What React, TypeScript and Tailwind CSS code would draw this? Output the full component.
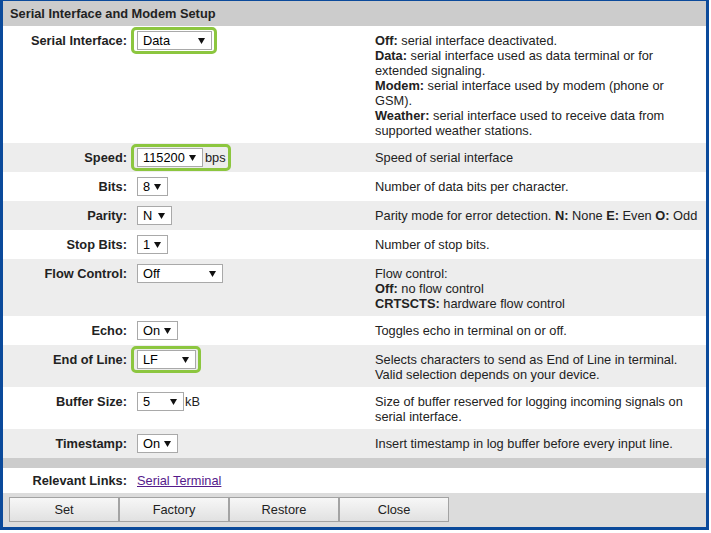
import React from "react";

const GREEN = "border-[#8cc63f]";

function Sel({ value, w }: { value: string; w: number }) {
  return (
    <span
      className="relative inline-flex items-center h-[19px] bg-white border border-[#a9a9a9] pl-[5px] text-black align-top"
      style={{ width: w }}
    >
      <span className="leading-[17px]">{value}</span>
      <svg
        className="absolute right-[6px] top-[6px]"
        width="7"
        height="6"
        viewBox="0 0 7 6"
      >
        <path d="M0 0 L7 0 L3.5 6 Z" fill="#111" />
      </svg>
    </span>
  );
}

type Row = {
  label: string;
  value: string;
  w: number;
  suffix?: string;
  hl?: boolean;
  gray: boolean;
  desc: React.ReactNode[];
};

const B = ({ children }: { children: React.ReactNode }) => (
  <b className="font-bold">{children}</b>
);

const rows: Row[] = [
  {
    label: "Serial Interface:",
    value: "Data",
    w: 75,
    hl: true,
    gray: false,
    desc: [
      <>
        <B>Off:</B> serial interface deactivated.
      </>,
      <>
        <B>Data:</B> serial interface used as data terminal or for
      </>,
      <>extended signaling.</>,
      <>
        <B>Modem:</B> serial interface used by modem (phone or
      </>,
      <>GSM).</>,
      <>
        <B>Weather:</B> serial interface used to receive data from
      </>,
      <>supported weather stations.</>,
    ],
  },
  {
    label: "Speed:",
    value: "115200",
    w: 66,
    suffix: "bps",
    hl: true,
    gray: true,
    desc: [<>Speed of serial interface</>],
  },
  {
    label: "Bits:",
    value: "8",
    w: 31,
    gray: false,
    desc: [<>Number of data bits per character.</>],
  },
  {
    label: "Parity:",
    value: "N",
    w: 35,
    gray: true,
    desc: [
      <>
        Parity mode for error detection. <B>N:</B> None <B>E:</B> Even{" "}
        <B>O:</B> Odd
      </>,
    ],
  },
  {
    label: "Stop Bits:",
    value: "1",
    w: 31,
    gray: false,
    desc: [<>Number of stop bits.</>],
  },
  {
    label: "Flow Control:",
    value: "Off",
    w: 86,
    gray: true,
    desc: [
      <>Flow control:</>,
      <>
        <B>Off:</B> no flow control
      </>,
      <>
        <B>CRTSCTS:</B> hardware flow control
      </>,
    ],
  },
  {
    label: "Echo:",
    value: "On",
    w: 41,
    gray: false,
    desc: [<>Toggles echo in terminal on or off.</>],
  },
  {
    label: "End of Line:",
    value: "LF",
    w: 59,
    hl: true,
    gray: true,
    desc: [
      <>Selects characters to send as End of Line in terminal.</>,
      <>Valid selection depends on your device.</>,
    ],
  },
  {
    label: "Buffer Size:",
    value: "5",
    w: 47,
    suffix: "kB",
    gray: false,
    desc: [
      <>Size of buffer reserved for logging incoming signals on</>,
      <>serial interface.</>,
    ],
  },
  {
    label: "Timestamp:",
    value: "On",
    w: 41,
    gray: true,
    desc: [<>Insert timestamp in log buffer before every input line.</>],
  },
];

function Btn({ children }: { children: React.ReactNode }) {
  return (
    <div className="w-[110px] h-[25px] flex items-center justify-center border border-[#a3a3a3] bg-gradient-to-b from-[#f7f7f7] to-[#e1e1e1] text-[#222]">
      {children}
    </div>
  );
}

export default function App() {
  return (
    <div
      className="w-[709px] bg-white border-[#0b4a9b] border-t border-x-[3px] border-b-[3px] text-[12.8px] leading-[15px] text-[#222]"
      style={{ fontFamily: '"Liberation Sans", Arial, sans-serif' }}
    >
      <div className="h-[25px] bg-[#cccccc] pl-[7px] flex items-center font-bold">
        Serial Interface and Modem Setup
      </div>
      {rows.map((r, i) => (
        <div
          key={i}
          className={`flex ${r.gray ? "bg-[#ededed]" : "bg-white"}`}
        >
          <div className="w-[130px] shrink-0 text-right pr-[6px] pt-[7px] font-bold whitespace-nowrap">
            {r.label}
          </div>
          <div className="w-[237px] shrink-0 pl-[4px] py-[5px]">
            <span className="relative inline-flex items-start">
              <Sel value={r.value} w={r.w} />
              {r.suffix && (
                <span
                  className={`leading-[19px] ${
                    r.suffix === "bps" ? "ml-[2px]" : "ml-[1px]"
                  }`}
                >
                  {r.suffix}
                </span>
              )}
              {r.hl && (
                <span
                  className={`absolute -left-[6px] -top-[4px] -bottom-[4px] border-[3px] ${GREEN} rounded-[5px] ${
                    r.suffix ? "-right-[5px]" : "-right-[5px]"
                  }`}
                />
              )}
            </span>
          </div>
          <div className="flex-1 pl-[5px] pt-[7px] pb-[5px]">
            {r.desc.map((d, j) => (
              <div key={j} className="whitespace-nowrap">
                {d}
              </div>
            ))}
          </div>
        </div>
      ))}
      <div className="h-[10px] bg-[#cccccc]" />
      <div className="flex h-[25px] items-center bg-white">
        <div className="w-[130px] shrink-0 text-right pr-[6px] font-bold">
          Relevant Links:
        </div>
        <div className="pl-[4px]">
          <span className="text-[#551a8b] underline">Serial Terminal</span>
        </div>
      </div>
      <div className="h-[34px] bg-[#dcdcdc] pl-[6px] pt-[4px] flex items-start">
        <Btn>Set</Btn>
        <Btn>Factory</Btn>
        <Btn>Restore</Btn>
        <Btn>Close</Btn>
      </div>
    </div>
  );
}
